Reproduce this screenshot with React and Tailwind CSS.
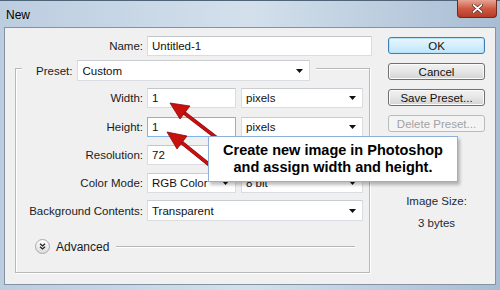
import React from 'react'

const Caret = () => (
  <svg width="7" height="4" viewBox="0 0 7 4" className="shrink-0">
    <path d="M0 0h7L3.5 4z" fill="#111" />
  </svg>
)

const Field = ({ value, width, focus }) => (
  <div
    className={`h-[20px] bg-white border flex items-center pl-[4px] text-[#111] ${
      focus ? 'border-[#7eb4ea]' : 'border-[#d9dce1] border-t-[#c3c6cb]'
    } ${width}`}
  >
    {value}
  </div>
)

const Select = ({ value, width, tall }) => (
  <div
    className={`${tall ? 'h-[21px]' : 'h-[20px]'} bg-white border border-[#d9dce1] border-t-[#c9ccd1] flex items-center justify-between pl-[4px] pr-[6px] text-[#111] ${width}`}
  >
    <span>{value}</span>
    <Caret />
  </div>
)

const Row = ({ label, children, className = '' }) => (
  <div className={`flex items-center gap-[4px] ${className}`}>
    <div className="w-[127px] text-right text-[#1b1b1b]">{label}</div>
    {children}
  </div>
)

const Button = ({ children, primary, disabled }) => (
  <div
    className={`h-[17px] w-[97px] rounded-[3px] border flex items-center justify-center ${
      primary
        ? 'border-[#3c7fb1] bg-gradient-to-b from-[#eaf6fd] to-[#bee6fd] shadow-[inset_0_0_0_1px_#b7e2f8] text-[#111]'
        : disabled
        ? 'border-[#b9bcbf] bg-[#f4f4f4] text-[#a3a3a3]'
        : 'border-[#707070] bg-gradient-to-b from-[#f2f2f2] via-[#e6e6e6] to-[#d3d3d3] shadow-[inset_0_0_0_1px_#fbfbfb] text-[#111]'
    }`}
  >
    {children}
  </div>
)

export default function App() {
  return (
    <div
      className="relative w-[500px] h-[290px] overflow-hidden flex flex-col bg-gradient-to-r from-[#bccde0] via-[#d3e0ec] to-[#a8bdd3] text-[11.5px] leading-[14px]"
      style={{ fontFamily: '"Liberation Sans", Arial, sans-serif' }}
    >
      {/* title bar */}
      <div className="h-[27px] shrink-0 flex justify-between border-t border-[#4f6478] pl-[6px] pr-[3px]">
        <span className="pt-[7px] text-[12px] text-black">New</span>
        <div className="w-[40px] h-[18px] -mt-px rounded-b-[4px] border border-t-0 border-[#6b2a22] bg-gradient-to-b from-[#e6a494] via-[#cf5a44] to-[#b83a24] flex items-center justify-center">
          <svg width="11" height="9" viewBox="0 0 11 9">
            <path d="M1.5 1l8 7M9.5 1l-8 7" stroke="#4a1a12" strokeWidth="3" strokeLinecap="round" />
            <path d="M1.5 1l8 7M9.5 1l-8 7" stroke="#fff" strokeWidth="1.8" strokeLinecap="round" />
          </svg>
        </div>
      </div>

      {/* client area */}
      <div className="mx-[4px] h-[258px] shrink-0 bg-[#f0f0f0] border border-[#8493a4] flex">
        <div className="w-[367px]">
          <div className="mt-[8px] flex items-center gap-[4px]">
            <div className="w-[138px] text-right text-[#1b1b1b]">Name:</div>
            <Field value="Untitled-1" width="w-[225px]" />
          </div>

          <div className="ml-[10px] mt-[12px] w-[355px] h-[205px] border border-[#b9b9b9] shadow-[inset_1px_1px_0_#fff,1px_1px_0_#fff]">
            <div className="-mt-[9px] ml-[6px] w-[294px] bg-[#f0f0f0] flex items-center pl-[14px] gap-[5px]">
              <span className="text-[#1b1b1b]">Preset:</span>
              <Select value="Custom" width="w-[233px]" tall />
            </div>

            <Row label="Width:" className="mt-[7px]">
              <Field value="1" width="w-[89px]" />
              <Select value="pixels" width="w-[122px] ml-px" />
            </Row>
            <Row label="Height:" className="mt-[9px]">
              <Field value="1" width="w-[89px]" focus />
              <Select value="pixels" width="w-[122px] ml-px" />
            </Row>
            <Row label="Resolution:" className="mt-[8px]">
              <Field value="72" width="w-[89px]" />
              {/* hidden under the callout in the reference */}
              <Select value="" width="w-[122px] ml-px" />
            </Row>
            <Row label="Color Mode:" className="mt-[8px]">
              <Select value="RGB Color" width="w-[89px]" />
              <Select value="8 bit" width="w-[122px] ml-px" />
            </Row>
            <Row label="Background Contents:" className="mt-[7px]">
              <Select value="Transparent" width="w-[216px]" tall />
            </Row>

            <div className="mt-[18px] ml-[19px] mr-[14px] flex items-center">
              <div className="w-[15px] h-[15px] rounded-full border border-[#a9a9a9] bg-gradient-to-b from-[#ffffff] to-[#dcdcdc] flex items-center justify-center">
                <svg width="7" height="7" viewBox="0 0 7 7">
                  <path d="M1 0.8l2.5 2.2L6 0.8M1 3.8l2.5 2.2L6 3.8" stroke="#222" strokeWidth="1.3" fill="none" />
                </svg>
              </div>
              <span className="ml-[6px] text-[#1b1b1b] text-[12px]">Advanced</span>
              <div className="ml-[7px] flex-1 h-[2px] border-t border-[#b7b7b7] border-b border-b-white" />
            </div>
          </div>
        </div>

        <div className="ml-[16px] w-[97px] flex flex-col">
          <div className="mt-[9px]">
            <Button primary>OK</Button>
          </div>
          <div className="mt-[9px]">
            <Button>Cancel</Button>
          </div>
          <div className="mt-[9px]">
            <Button>Save Preset...</Button>
          </div>
          <div className="mt-[9px]">
            <Button disabled>Delete Preset...</Button>
          </div>
          <div className="mt-[62px] text-center text-[#1e2a3a]">Image Size:</div>
          <div className="mt-[8px] text-center text-[#1e2a3a]">3 bytes</div>
        </div>
      </div>

      {/* annotation arrows */}
      <svg className="absolute left-0 top-0 pointer-events-none" width="500" height="290">
        <line x1="222" y1="142" x2="183" y2="112" stroke="#8a0a0a" strokeWidth="3.6" />
        <line x1="222" y1="142" x2="183" y2="112" stroke="#c8100f" strokeWidth="2.6" />
        <path d="M170 103L190 106L180 119z" fill="#c8100f" stroke="#8a0a0a" strokeWidth="0.8" />
        <line x1="222" y1="175" x2="181" y2="142" stroke="#8a0a0a" strokeWidth="3.6" />
        <line x1="222" y1="175" x2="181" y2="142" stroke="#c8100f" strokeWidth="2.6" />
        <path d="M167 132L187 136L177 149z" fill="#c8100f" stroke="#8a0a0a" strokeWidth="0.8" />
      </svg>

      {/* callout */}
      <div className="absolute left-[208px] top-[136px] w-[250px] h-[46px] bg-white border border-[#8fb0d8] shadow-[2px_3px_3px_rgba(0,0,0,0.25)] flex flex-col items-center justify-center font-bold text-black text-[14.5px] leading-[17px]">
        <span>Create new image in Photoshop</span>
        <span>and assign width and height.</span>
      </div>
    </div>
  )
}
